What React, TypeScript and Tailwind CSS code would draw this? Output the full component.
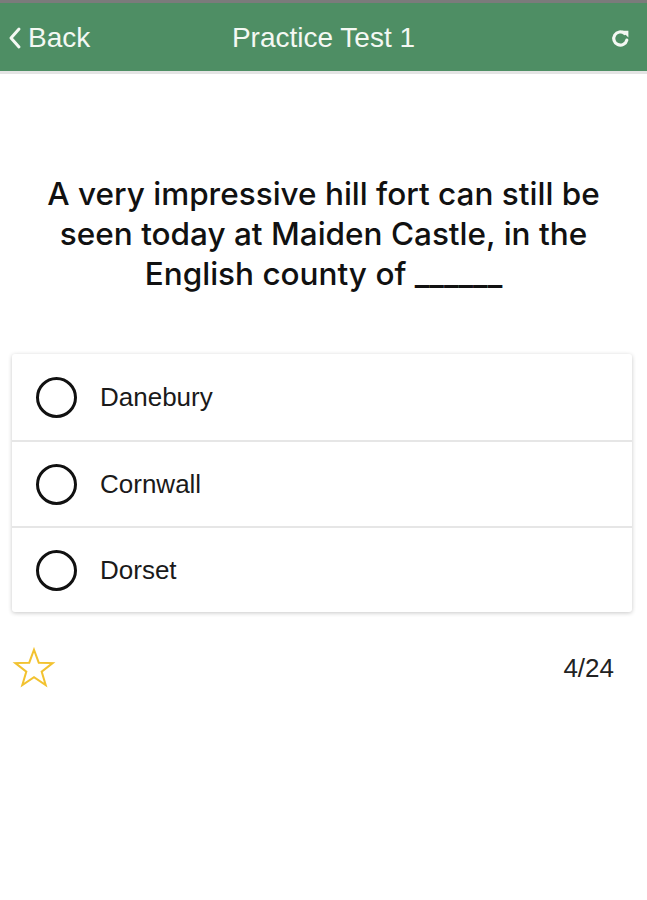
export default function App() {
  const options = ['Danebury', 'Cornwall', 'Dorset'];
  return (
    <div className="min-h-[900px] bg-white" style={{ fontFamily: '"Liberation Sans", Arial, sans-serif' }}>
      {/* Header */}
      <div className="border-t-[3px] border-[#7b7b7b] bg-[#4e8e64] border-b-[3px] border-b-[#e4e4e4]">
        <div className="relative flex h-[68px] items-center px-2 pt-[2px] text-[#f4f8f3]">
          <div className="flex items-center gap-[6px]">
            <svg width="14" height="24" viewBox="0 0 14 24" fill="none">
              <path d="M11 3 L3 12 L11 21" stroke="currentColor" strokeWidth="3" strokeLinecap="round" strokeLinejoin="round" />
            </svg>
            <span className="text-[28px]">Back</span>
          </div>
          <div className="absolute left-1/2 -translate-x-1/2 text-[28px]">Practice Test 1</div>
          <div className="ml-auto mr-[8px]">
            <svg width="21" height="21" viewBox="0 0 20 20" fill="none">
              <path d="M16 11.5 A6.3 6.3 0 1 1 14 5.2" stroke="currentColor" strokeWidth="3" strokeLinecap="round" />
              <path d="M11 2.5 L17.5 2.5 L17.5 9 Z" fill="currentColor" />
            </svg>
          </div>
        </div>
      </div>

      {/* Question */}
      <div
        className="mx-auto w-[600px] pt-[100px] pb-[60px] text-center text-[31.5px] font-medium leading-[40px] text-[#111]"
        style={{ fontFamily: 'Inter, "Liberation Sans", sans-serif' }}
      >
        A very impressive hill fort can still be seen today at Maiden Castle, in the English county of ______
      </div>

      {/* Options */}
      <div className="ml-3 mr-[15px] rounded-[3px] bg-white shadow-[0_1px_4px_rgba(0,0,0,0.22)]">
        {options.map((o, i) => (
          <div
            key={o}
            className={`flex h-[86px] items-center gap-[23px] pl-[24px] ${i > 0 ? 'border-t-2 border-[#e6e6e6]' : ''}`}
          >
            <div className="h-[41px] w-[41px] rounded-full border-[3px] border-[#111]" />
            <span className="text-[26px] text-[#1a1a1a]">{o}</span>
          </div>
        ))}
      </div>

      {/* Footer row */}
      <div className="flex items-center justify-between pl-[12px] pr-[33px] pt-[35px]">
        <svg width="44" height="42" viewBox="0 0 24 23" fill="none">
          <path
            d="M12 1.5 L14.6 8.6 L22.2 8.8 L16.2 13.5 L18.4 20.8 L12 16.5 L5.6 20.8 L7.8 13.5 L1.8 8.8 L9.4 8.6 Z"
            stroke="#f2c230"
            strokeWidth="1.1"
            strokeLinejoin="miter"
          />
        </svg>
        <span className="text-[26px] text-[#222]">4/24</span>
      </div>
    </div>
  );
}
